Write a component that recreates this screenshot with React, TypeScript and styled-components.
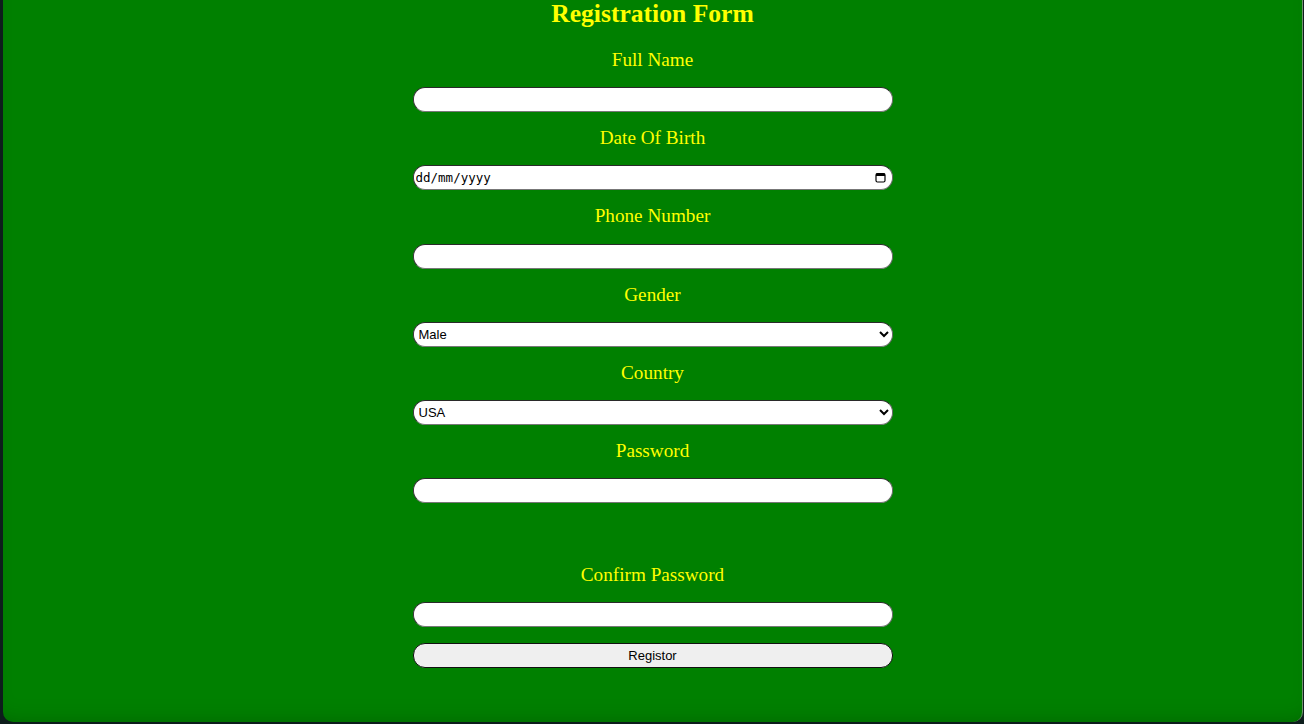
import React from "react";
import styled, { createGlobalStyle } from "styled-components";

const Global = createGlobalStyle`
  html, body {
    margin: 0;
    padding: 0;
    background: #0d1d1c;
  }
  body {
    font-family: "Liberation Serif", "Times New Roman", serif;
    overflow: hidden;
  }
`;

const Page = styled.div`
  width: 1304px;
  height: 724px;
  box-sizing: border-box;
  padding: 0 1px 2px 3px;
  display: flex;
`;

const Card = styled.form`
  flex: 1;
  background: #008000;
  border-radius: 0 0 10px 10px;
  box-shadow: inset 0 -14px 22px -16px rgba(0, 40, 0, 0.35);
  display: flex;
  flex-direction: column;
  align-items: center;
  border-right: 1px solid #6f8f6f;
`;

const Title = styled.h2`
  margin: 0 0 21px;
  font-size: 25.6px;
  line-height: 28px;
  font-weight: bold;
  color: #ffff00;
`;

const Label = styled.label`
  display: block;
  font-size: 19.2px;
  line-height: 22.2px;
  color: #ffff00;
  margin-bottom: 16px;
`;

const Field = styled.input`
  display: block;
  box-sizing: border-box;
  width: 480px;
  height: 25px;
  margin: 0 0 15px;
  padding: 1px 2px;
  border: 1px solid;
  border-color: #2a2a2a #6a6a6a #777 #3a3a3a;
  border-radius: 12px;
  background: #fff;
  font-family: "Liberation Sans", Arial, sans-serif;
  font-size: 13px;
  outline: none;
`;

const DateWrap = styled.div`
  position: relative;
  width: 480px;
  margin: 0 0 15px;
`;

const DateField = styled(Field)`
  margin: 0;
  font-family: "DejaVu Sans Mono", "Liberation Mono", monospace;
  font-size: 12.5px;
  padding-left: 2px;
  &::placeholder {
    color: #000;
    opacity: 1;
  }
`;

const CalIcon = styled.svg`
  position: absolute;
  right: 7px;
  top: 7px;
  width: 11px;
  height: 11px;
`;

const Select = styled.select`
  display: block;
  box-sizing: border-box;
  width: 480px;
  height: 25px;
  margin: 0 0 15px;
  padding: 0 1px;
  border: 1px solid;
  border-color: #2a2a2a #6a6a6a #777 #3a3a3a;
  border-radius: 12px;
  background: #fff;
  color: #000;
  font-family: "Liberation Sans", Arial, sans-serif;
  font-size: 13px;
  outline: none;
`;

const Spacer = styled.div`
  height: 46px;
`;

const Button = styled.button`
  display: block;
  box-sizing: border-box;
  width: 480px;
  height: 25px;
  margin: 1px 0 0;
  border: 1px solid #111;
  border-radius: 12px;
  background: #efefef;
  color: #000;
  font-family: "Liberation Sans", Arial, sans-serif;
  font-size: 13px;
`;

export default function App() {
  return (
    <Page>
      <Global />
      <Card onSubmit={(e) => e.preventDefault()}>
        <Title>Registration Form</Title>
        <Label htmlFor="name">Full Name</Label>
        <Field id="name" type="text" />
        <Label htmlFor="dob">Date Of Birth</Label>
        <DateWrap>
          <DateField id="dob" type="text" placeholder="dd/mm/yyyy" />
          <CalIcon viewBox="0 0 11 11">
            <rect x="1" y="1.5" width="9" height="8.5" rx="1.5" fill="none" stroke="#000" strokeWidth="1.2" />
            <rect x="1" y="1.5" width="9" height="2.5" fill="#000" />
          </CalIcon>
        </DateWrap>
        <Label htmlFor="phone">Phone Number</Label>
        <Field id="phone" type="tel" />
        <Label htmlFor="gender">Gender</Label>
        <Select id="gender" defaultValue="Male">
          <option>Male</option>
          <option>Female</option>
          <option>Other</option>
        </Select>
        <Label htmlFor="country">Country</Label>
        <Select id="country" defaultValue="USA">
          <option>USA</option>
          <option>Canada</option>
          <option>UK</option>
        </Select>
        <Label htmlFor="pw">Password</Label>
        <Field id="pw" type="password" />
        <Spacer />
        <Label htmlFor="cpw">Confirm Password</Label>
        <Field id="cpw" type="password" />
        <Button type="submit">Registor</Button>
      </Card>
    </Page>
  );
}
